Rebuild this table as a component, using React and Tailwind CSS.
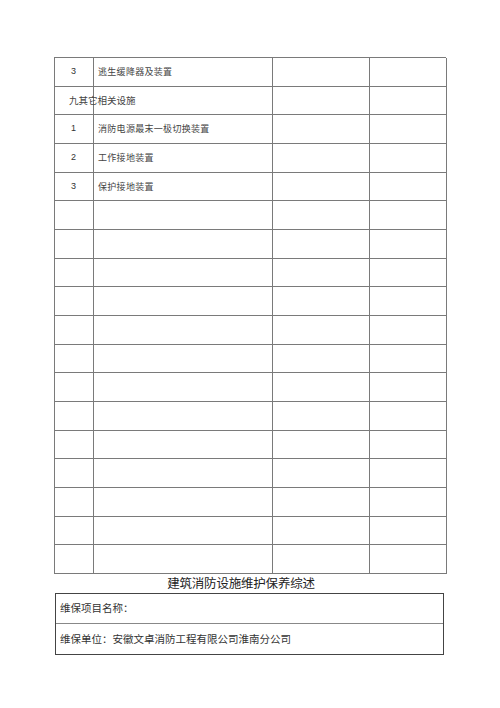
import React from "react";

const rows = [
  { no: "3", name: "逃生缓降器及装置" },
  { no: "", name: "", group: "九其它相关设施" },
  { no: "1", name: "消防电源最末一极切换装置" },
  { no: "2", name: "工作接地装置" },
  { no: "3", name: "保护接地装置" },
];

const empty = Array.from({ length: 13 }, () => ({ no: "", name: "" }));

const cjk = { fontFamily: '"Noto Sans CJK SC", sans-serif' };

export default function App() {
  const all = [...rows, ...empty];
  return (
    <div className="w-[500px] h-[708px] bg-white text-[#333] pt-[57px]">
      {/* Checklist table */}
      <div className="ml-[54px] w-[392px] border-l border-t border-[#7a7a7a]">
        {all.map((r, i) => (
          <div key={i} className="flex h-[28.67px]">
            {r.group ? (
              <div className="w-[39px] shrink-0 border-r border-b border-[#7a7a7a] flex items-center pl-[14px] whitespace-nowrap">
                <span className="text-[9.5px] text-[#444]" style={cjk}>
                  {r.group}
                </span>
              </div>
            ) : (
              <div className="w-[39px] shrink-0 border-r border-b border-[#7a7a7a] flex items-center justify-center">
                <span className="text-[9px] pr-[1px]" style={{ fontFamily: '"Liberation Sans", sans-serif' }}>
                  {r.no}
                </span>
              </div>
            )}
            <div className="w-[179px] shrink-0 border-r border-b border-[#7a7a7a] flex items-center pl-[4px]">
              <span className="text-[9px] tracking-[0.3px] text-[#444]" style={cjk}>
                {r.name}
              </span>
            </div>
            <div className="w-[97px] shrink-0 border-r border-b border-[#7a7a7a]" />
            <div className="w-[77px] shrink-0 border-r border-b border-[#7a7a7a]" />
          </div>
        ))}
      </div>

      {/* Summary heading */}
      <div className="w-[500px] flex justify-center pr-[18px] h-[19px] items-center text-[12.5px] tracking-[-0.2px] text-[#222]" style={cjk}>
        建筑消防设施维护保养综述
      </div>

      {/* Summary box */}
      <div className="ml-[55px] w-[389px] border-[1.5px] border-[#444]">
        <div className="h-[30px] border-b border-[#888] flex items-center pl-[4px] text-[10.5px] text-[#333]" style={cjk}>
          维保项目名称：
        </div>
        <div className="h-[30px] flex items-center pl-[4px] text-[10.5px] text-[#333]" style={cjk}>
          维保单位：安徽文卓消防工程有限公司淮南分公司
        </div>
      </div>
    </div>
  );
}
